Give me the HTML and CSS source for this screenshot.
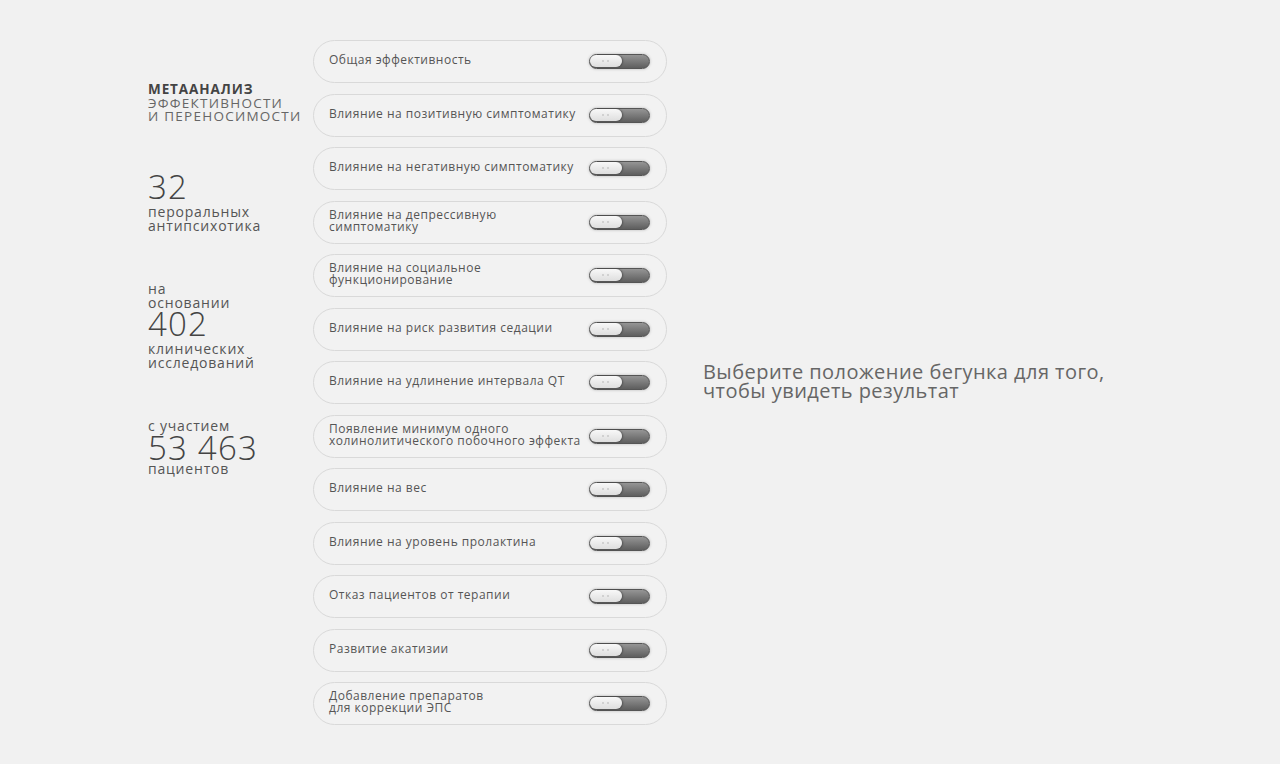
FILE: index.html
```html
<!DOCTYPE html>
<html lang="ru">
<head>
  <meta charset="UTF-8">
  <meta name="viewport" content="width=device-width, initial-scale=1.0">
  <title>Метаанализ эффективности и переносимости</title>
  <link rel="stylesheet" href="styles.css">
</head>
<body>
  <div class="page">
    <div class="facts">
      <div class="facts-title">
        <b>Метаанализ</b><br>
        эффективности<br>
        и переносимости
      </div>

      <div class="fact fact-drugs">
        <div class="fact-num">32</div>
        <div class="fact-text">пероральных<br>антипсихотика</div>
      </div>

      <div class="fact fact-trials">
        <div class="fact-text">на<br>основании</div>
        <div class="fact-num">402</div>
        <div class="fact-text">клинических<br>исследований</div>
      </div>

      <div class="fact fact-patients">
        <div class="fact-text">с участием</div>
        <div class="fact-num">53 463</div>
        <div class="fact-text">пациентов</div>
      </div>
    </div>

    <div class="options" id="options"></div>

    <div class="hint">
      Выберите положение бегунка для того,<br>
      чтобы увидеть результат
    </div>
  </div>

  <script>
    const options = [
      "Общая эффективность",
      "Влияние на позитивную симптоматику",
      "Влияние на негативную симптоматику",
      "Влияние на депрессивную<br>симптоматику",
      "Влияние на социальное<br>функционирование",
      "Влияние на риск развития седации",
      "Влияние на удлинение интервала QT",
      "Появление минимум одного<br>холинолитического побочного эффекта",
      "Влияние на вес",
      "Влияние на уровень пролактина",
      "Отказ пациентов от терапии",
      "Развитие акатизии",
      "Добавление препаратов<br>для коррекции ЭПС"
    ];

    const list = document.getElementById("options");
    options.forEach((label) => {
      const row = document.createElement("div");
      row.className = "option";
      row.innerHTML = `<span class="option-label">${label}</span>
        <span class="toggle"><span class="toggle-knob"></span></span>`;
      row.querySelector(".toggle").addEventListener("click", (e) => {
        e.currentTarget.classList.toggle("on");
      });
      list.appendChild(row);
    });
  </script>
</body>
</html>
```

FILE: styles.css
```css
body {
  margin: 0;
  background: #f1f1f1;
  font-family: 'Open Sans', 'Liberation Sans', sans-serif;
  color: #555555;
}

.page {
  display: flex;
  align-items: flex-start;
  padding: 40px 0 0 148px;
  height: 724px;
}

/* left column */
.facts {
  width: 165px;
  padding-top: 43px;
  display: flex;
  flex-direction: column;
}

.facts-title {
  font-size: 13.5px;
  line-height: 13.5px;
  letter-spacing: 1.25px;
  text-transform: uppercase;
  color: #666666;
}

.facts-title b {
  color: #444444;
  letter-spacing: 0.9px;
}

.fact-num {
  font-size: 33px;
  line-height: 28px;
  font-weight: 300;
  letter-spacing: 1.2px;
  color: #444444;
}

.fact-text {
  font-size: 14px;
  line-height: 14px;
  letter-spacing: 0.8px;
  color: #555555;
}

.fact-drugs {
  margin-top: 49px;
}

.fact-drugs .fact-num {
  margin-bottom: 4px;
}

.fact-trials {
  margin-top: 49px;
}

.fact-trials .fact-num {
  margin: 0 0 4px;
}

.fact-patients {
  margin-top: 49px;
}

.fact-patients .fact-num {
  margin: 1px 0 0;
}

/* options list */
.options {
  width: 354px;
  display: flex;
  flex-direction: column;
  gap: 10.5px;
}

.option {
  box-sizing: border-box;
  height: 43px;
  display: flex;
  align-items: center;
  justify-content: space-between;
  padding: 0 16px 0 15px;
  border: 1.5px solid #d9d9d9;
  border-radius: 22px;
  background: #f2f2f2;
}

.option-label {
  margin-bottom: 3px;
  font-size: 12px;
  line-height: 12px;
  letter-spacing: 0.5px;
  color: #555555;
}

.toggle {
  flex: none;
  position: relative;
  width: 61px;
  height: 15px;
  box-sizing: border-box;
  border: 1.5px solid #555555;
  border-radius: 8px;
  background: linear-gradient(#959595, #5e5e5e);
  box-shadow: 0 0 3px rgba(0, 0, 0, 0.25);
  cursor: pointer;
}

.toggle-knob {
  position: absolute;
  top: 0;
  left: 0;
  width: 32px;
  height: 12px;
  border-radius: 7px;
  background: linear-gradient(#f8f8f8, #dedede);
  box-shadow: 1px 0 2px rgba(0, 0, 0, 0.35);
  transition: left 0.2s;
}

.toggle-knob::before,
.toggle-knob::after {
  content: "";
  position: absolute;
  top: 5px;
  width: 2px;
  height: 2px;
  border-radius: 50%;
  background: #c8c8c8;
}

.toggle-knob::before {
  left: 12px;
}

.toggle-knob::after {
  left: 17px;
}

.toggle.on .toggle-knob {
  left: 26px;
}

/* right hint */
.hint {
  align-self: center;
  margin: 0 0 0 36px;
  padding-bottom: 42px;
  font-size: 20px;
  line-height: 19px;
  letter-spacing: 0.45px;
  color: #666666;
}
```
